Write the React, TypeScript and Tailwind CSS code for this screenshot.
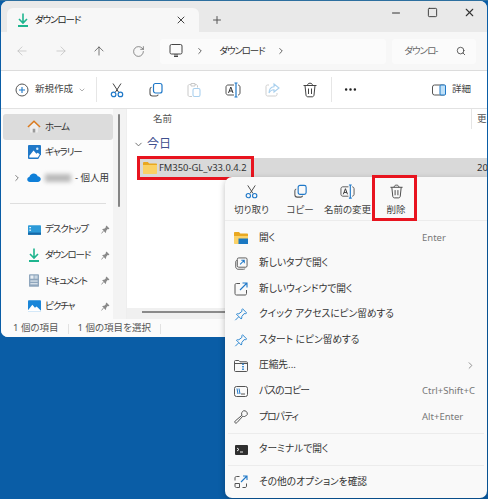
import { ArrowLeft, ArrowRight, ArrowUp, ChevronDown, ChevronRight, Minus, MoreHorizontal, Plus, RotateCw, Search, Square, X } from "lucide-react";

const Cut = ({ s = 16 }: { s?: number }) => (
  <svg width={s} height={s} viewBox="0 0 16 16" fill="none">
    <path d="M4 1.500 9.500 10M12 1.500 6.500 10" stroke="#444" strokeWidth="1" />
    <circle cx="4.600" cy="12.400" r="2.300" stroke="#1f78c8" strokeWidth="1.200" />
    <circle cx="11.400" cy="12.400" r="2.300" stroke="#1f78c8" strokeWidth="1.200" />
  </svg>
);

const Copy = ({ s = 16 }: { s?: number }) => (
  <svg width={s} height={s} viewBox="0 0 16 16" fill="none">
    <path d="M3.500 5.200C2.400 5.600 2 6.300 2 7.300v4.200C2 13 3 14 4.500 14h3.700c1 0 1.700-.4 2.100-1.400" stroke="#555" strokeWidth="1.100" />
    <rect x="5.500" y="1.500" width="8.500" height="9.500" rx="2" stroke="#1f78c8" strokeWidth="1.200" />
  </svg>
);

const Paste = () => (
  <svg width="16" height="16" viewBox="0 0 16 16" fill="none">
    <path d="M5 2.500H3.500C2.700 2.500 2 3.200 2 4v9c0 .8.700 1.500 1.500 1.500H6M9 2.500h1c.8 0 1.500.7 1.500 1.500v1.500M5 1.500h4v2.500H5z" stroke="#c9c9c9" strokeWidth="1" />
    <rect x="7" y="6.500" width="7" height="8" rx="1.500" stroke="#a9d0ee" strokeWidth="1.100" />
  </svg>
);

const Rename = ({ s = 16 }: { s?: number }) => (
  <svg width={s} height={s} viewBox="0 0 16 16" fill="none">
    <path d="M9 3H3C1.900 3 1 3.900 1 5v6c0 1.100.9 2 2 2h6M13 3c1.100 0 2 .9 2 2v6c0 1.100-.9 2-2 2" stroke="#555" strokeWidth="1" />
    <path d="M11 1v14M9.500 1h3M9.500 15h3" stroke="#1f78c8" strokeWidth="1.200" />
    <path d="M3.500 11 5.800 5l2.200 6M4.300 9h3" stroke="#333" strokeWidth="1" />
  </svg>
);

const Share = () => (
  <svg width="16" height="16" viewBox="0 0 16 16" fill="none">
    <path d="M5 3H3.500C2.700 3 2 3.700 2 4.500v8c0 .8.700 1.500 1.500 1.500h8c.8 0 1.500-.7 1.500-1.500V11" stroke="#cfcfcf" strokeWidth="1" />
    <path d="M10 2l5 4-5 4V7.700C7.500 7.700 6 8.800 5 11c0-4 1.800-6 5-6.300z" stroke="#a9d0ee" strokeWidth="1.100" />
  </svg>
);

const Trash = ({ s = 16 }: { s?: number }) => (
  <svg width={s} height={s} viewBox="0 0 16 16" fill="none" stroke="#444" strokeWidth="1">
    <path d="M1.500 3.500h13M5.500 3.500C5.500 2 6.500 1.200 8 1.200s2.500.8 2.500 2.300" />
    <path d="M3 3.500 4 13c.1 1 .8 1.800 1.800 1.800h4.400c1 0 1.700-.8 1.800-1.800l1-9.500" />
    <path d="M6.500 6.500v5.500M9.500 6.500v5.500" />
  </svg>
);

const Pin = () => (
  <svg width="15" height="15" viewBox="0 0 16 16" fill="none" stroke="#2a85d0" strokeWidth="1.100">
    <path d="M9.800 1.500 14.500 6.200 13.500 7 11.500 7 8.800 10.500C9.200 11.500 9 12.500 8.300 13.200L2.800 7.700C3.500 7 4.500 6.800 5.500 7.200L9 4.500V2.500z" />
    <path d="M5.300 10.700 1.500 14.500" />
  </svg>
);

const SmallPin = () => (
  <svg width="9" height="9" viewBox="0 0 16 16" fill="#8a8a8a">
    <path d="M9.800 1 15 6.200 13.500 7.500 11.800 7.300 9 10.700C9.500 11.700 9.300 13 8.300 14L2 7.700C3 6.700 4.300 6.500 5.300 7L8.700 4.200 8.500 2.500z" />
    <path d="M4.500 10.500 1 15" stroke="#8a8a8a" strokeWidth="1.500" />
  </svg>
);

const Download = ({ s = 14 }: { s?: number }) => (
  <svg width={s} height={s} viewBox="0 0 14 14" fill="none" stroke="#1fb58f" strokeWidth="1.600">
    <path d="M7 .5v9M3 6l4 4 4-4" />
    <path d="M2 13h10" strokeWidth="1.800" />
  </svg>
);

const Folder = ({ w = 14 }: { w?: number }) => (
  <svg width={w} height={(w * 12) / 14} viewBox="0 0 14 12">
    <path d="M0 1.200C0 .5.500 0 1.200 0h3.600l1.400 1.600H13c.6 0 1 .4 1 1V4H0z" fill="#e9a820" />
    <path d="M0 3h14v8c0 .6-.4 1-1 1H1c-.6 0-1-.4-1-1z" fill="#fad165" />
  </svg>
);

const Home = () => (
  <svg width="14" height="13" viewBox="0 0 16 15" fill="none">
    <path d="M3.500 7v6.500c0 .6.400 1 1 1h7c.6 0 1-.4 1-1V7L8 3z" fill="#eeeeee" />
    <path d="M6.500 14.500V10h3v4.500" fill="#9a9a9a" />
    <path d="M1 8 8 1.500 15 8" stroke="#dc7a1c" strokeWidth="1.700" />
  </svg>
);

const Gallery = () => (
  <svg width="13" height="14" viewBox="0 0 14 15">
    <path d="M1 0h12c.6 0 1 .4 1 1v9l-3 5H1c-.6 0-1-.4-1-1V1c0-.6.400-1 1-1z" fill="#1f78c8" />
    <path d="M1.500 11.500 6 6l3 3.500 1.500-1.200L12.500 10v.5l-2 3H1.500z" fill="#fff" />
    <circle cx="10" cy="4" r="1.300" fill="#d9ecfa" />
  </svg>
);

const Cloud = () => (
  <svg width="14" height="9" viewBox="0 0 15 10">
    <path d="M3 10C1.300 10 0 8.800 0 7.200 0 5.800 1 4.700 2.300 4.500 3 2 5 .5 7.200.5c2 0 3.700 1.100 4.400 3C13.500 3.600 15 5 15 6.800 15 8.600 13.600 10 11.800 10z" fill="#0f7fd8" />
  </svg>
);

const Desktop = () => (
  <svg width="13" height="10" viewBox="0 0 15 11">
    <rect width="15" height="11" rx="1" fill="#2c9ad8" />
    <rect y="8.500" width="15" height="2.500" fill="#1668a8" />
    <rect x="1.500" y="2" width="2" height="1.500" fill="#dff1fb" />
    <rect x="1.500" y="5" width="2" height="1.500" fill="#dff1fb" />
  </svg>
);

const Documents = () => (
  <svg width="10" height="13" viewBox="0 0 11 14">
    <rect width="11" height="14" rx="1" fill="#8fa6bd" />
    <rect x="1.500" y="1.500" width="3.500" height="3.500" fill="#e8eef4" />
    <rect x="6" y="1.500" width="3.500" height="3.500" fill="#c9d6e2" />
    <rect x="1.500" y="7" width="8" height="1.200" fill="#e8eef4" />
    <rect x="1.500" y="10" width="8" height="1.200" fill="#e8eef4" />
  </svg>
);

const Picture = () => (
  <svg width="13" height="12" viewBox="0 0 15 13">
    <rect width="15" height="13" rx="1" fill="#1a86d8" />
    <path d="M0 11.500 5 5l3 3.500 2-1.500 5 5v.5c0 .3-.3.500-.5.500H.5C.2 13 0 12.800 0 12.500z" fill="#fff" />
  </svg>
);

const OpenFolder = () => (
  <svg width="14" height="12" viewBox="0 0 14 12">
    <path d="M0 1c0-.6.400-1 1-1h4l1.300 1.500H13c.6 0 1 .4 1 1V5H0z" fill="#e9a820" />
    <path d="M0 4h14v7c0 .6-.4 1-1 1H1c-.6 0-1-.4-1-1z" fill="#fbd267" />
    <rect x="4.500" y="6.500" width="9.500" height="5.500" fill="#1a78c2" />
  </svg>
);

const NewTab = () => (
  <svg width="13" height="13" viewBox="0 0 14 14" fill="none">
    <rect x="2.500" y="1" width="10.500" height="10" rx="1.500" stroke="#555" strokeWidth="1" />
    <path d="M2 3.500C1 4 .8 4.500.8 5.500v5.200C.8 12 2 13.200 3.300 13.200H9c1 0 1.500-.3 2-1" stroke="#555" strokeWidth="1" />
    <path d="M5.500 8 10 3.500M6.800 3.500H10v3.200" stroke="#1f78c8" strokeWidth="1.100" />
  </svg>
);

const NewWindow = () => (
  <svg width="14" height="14" viewBox="0 0 14 14" fill="none">
    <path d="M6 1.500H2.500C1.500 1.500 1 2 1 3v8.500c0 1 .5 1.500 1.500 1.500H11c1 0 1.500-.5 1.500-1.500V8" stroke="#555" strokeWidth="1" />
    <path d="M6 8 13 1M8.500 1H13v4.500" stroke="#1f78c8" strokeWidth="1.100" />
  </svg>
);

const Zip = () => (
  <svg width="14" height="12" viewBox="0 0 14 12" fill="none">
    <path d="M1.500.5h3.300L6 1.800h6.500c.6 0 1 .4 1 1v7.700c0 .6-.4 1-1 1h-11c-.6 0-1-.4-1-1v-9c0-.6.400-1 1-1zM.5 3.500h13" stroke="#555" strokeWidth="1" />
    <path d="M9 3.500v7" stroke="#1f78c8" strokeWidth="1.600" strokeDasharray="1.500 1" />
  </svg>
);

const PathCopy = () => (
  <svg width="14" height="11" viewBox="0 0 14 11" fill="none">
    <rect x=".5" y=".5" width="13" height="10" rx="2" stroke="#555" strokeWidth="1" />
    <path d="M3 2.500 4 8M5 2.500 6 8" stroke="#1f78c8" strokeWidth="1" />
    <path d="M7 8h4" stroke="#555" strokeWidth="1" />
  </svg>
);

const Wrench = () => (
  <svg width="14" height="14" viewBox="0 0 14 14" fill="none" stroke="#555" strokeWidth="1">
    <path d="M9.500 .8 7.700 2.600c-.3.700-.2 1.800.3 2.600L1.200 11c-.6.600-.6 1.300-.1 1.800.5.500 1.200.5 1.800-.1L8.800 6.200c.9.500 2.100.5 2.900-.2l1.600-1.600C13.600 2 11.800.4 9.500.8z" />
  </svg>
);

const Terminal = () => (
  <svg width="13" height="10" viewBox="0 0 13 10">
    <rect width="13" height="10" rx="1" fill="#2f2f2f" />
    <path d="M2 3l2 1.500L2 6" stroke="#fff" strokeWidth=".9" fill="none" />
    <path d="M5 7h3" stroke="#fff" strokeWidth=".9" />
  </svg>
);

const MoreOptions = () => (
  <svg width="14" height="14" viewBox="0 0 14 14" fill="none">
    <path d="M5.500 1.500H2.500C1.500 1.500 1 2 1 3v2.500M1 8.500V11c0 1 .5 1.500 1.500 1.500H5.500v-4H1M8.500 12.500H11c1 0 1.500-.5 1.500-1.500V8.500" stroke="#555" strokeWidth="1" />
    <path d="M7 7 13 1M9 1h4v4" stroke="#1f78c8" strokeWidth="1.100" />
  </svg>
);

const Tool = ({ children, w = "w-[38.600px]" }: { children: React.ReactNode; w?: string }) => (
  <div className={`${w} flex justify-center`}>{children}</div>
);

const Side = ({ icon, label, pin, sel, caret }: { icon: React.ReactNode; label: React.ReactNode; pin?: boolean; sel?: boolean; caret?: boolean }) => (
  <div className={`h-[25.600px] flex items-center relative rounded-[3px] ${sel ? "bg-[#dcdcdc]" : ""}`}>
    {caret && <ChevronRight className="absolute left-[9px] text-[#666]" size={10} />}
    <div className="w-[40px] flex justify-end pr-[1px] shrink-0">
      <div className="w-[16px] flex justify-center">{icon}</div>
    </div>
    <span className="ml-[2px] flex-1 whitespace-nowrap tracking-[-1.100px]">{label}</span>
    {pin && <div className="mr-[3px]"><SmallPin /></div>}
  </div>
);

const MenuTool = ({ icon, label, w }: { icon: React.ReactNode; label: string; w: string }) => (
  <div className={`${w} flex flex-col items-center`}>
    <div className="h-[18px] flex items-center">{icon}</div>
    <span className="mt-[3px] text-[9.500px] text-[#444] whitespace-nowrap">{label}</span>
  </div>
);

const MenuRow = ({ icon, label, hint, arrow, tight }: { icon: React.ReactNode; label: string; hint?: string; arrow?: boolean; tight?: boolean }) => (
  <div className="h-[25.600px] flex items-center pl-[9px] pr-[11px]">
    <div className="w-[14px] flex justify-center shrink-0">{icon}</div>
    <span className={`ml-[11px] flex-1 whitespace-nowrap text-[#333] text-[9.700px] ${tight ? "tracking-[-0.800px]" : ""}`}>{label}</span>
    {hint && <span className="text-[9.500px] text-[#777] w-[54px] whitespace-nowrap">{hint}</span>}
    {arrow && <ChevronRight className="text-[#888]" size={11} />}
  </div>
);

export default function App() {
  return (
    <div className="w-[488px] h-[499px] relative overflow-hidden bg-[#0a5da6] text-[9.500px] text-[#333] [font-family:'Noto_Sans','Noto_Sans_CJK_JP',sans-serif] [font-feature-settings:'palt']">
      <div className="bg-[#2d6f9f] h-[1px]" />
      <div className="ml-[1px] w-[486px] h-[336px] rounded-t-[7px] rounded-bl-[7px] overflow-hidden bg-white flex flex-col">
        {/* tabs */}
        <div className="h-[31px] bg-[#e9e9e9] flex items-end pl-[6px] shrink-0 relative">
          <div className="w-[192px] h-[24px] bg-[#f7f7f7] rounded-t-[6px] flex items-center pl-[9px] pr-[12px]">
            <Download />
            <span className="ml-[5px] flex-1 text-[#222] tracking-[-1.100px]">ダウンロード</span>
            <X size={12} className="text-[#444]" />
          </div>
          <Plus size={12} className="ml-[12px] mb-[6px] text-[#555]" />
          <div className="flex-1" />
          <div className="flex items-center mb-[13px] mr-[11px] gap-[25px] text-[#333]">
            <Minus size={12} />
            <Square size={11} />
            <X size={13} />
          </div>
        </div>
        {/* address */}
        <div className="h-[39px] bg-[#f7f7f7] border-b border-[#dcdcdc] flex items-center pl-[2px] shrink-0">
          <Tool><ArrowLeft size={14} className="text-[#bbb]" strokeWidth={1.200} /></Tool>
          <Tool><ArrowRight size={14} className="text-[#bbb]" strokeWidth={1.200} /></Tool>
          <Tool><ArrowUp size={14} className="text-[#444]" strokeWidth={1.200} /></Tool>
          <Tool><RotateCw size={13} className="text-[#555]" strokeWidth={1.200} /></Tool>
          <div className="ml-[3px] w-[226px] h-[25px] bg-[#fbfbfb] rounded-[3px] flex items-center pl-[9px]">
            <svg width="15" height="14" viewBox="0 0 15 14" fill="none" stroke="#444" strokeWidth="1">
              <rect x="1" y=".5" width="12" height="9.500" rx="1.500" />
              <path d="M5 12.500h4M6 10v2.500M8 10v2.500" />
            </svg>
            <ChevronRight size={10} className="ml-[11px] text-[#444]" />
            <span className="ml-[14px] tracking-[-1.100px]">ダウンロード</span>
            <ChevronRight size={10} className="ml-[11px] text-[#444]" />
          </div>
          <div className="ml-[6px] w-[84px] h-[25px] bg-[#fbfbfb] rounded-[3px] flex items-center pl-[12px] text-[#666]">
            <span className="flex-1 tracking-[-1px]">ダウンロ-</span>
            <Search size={10} className="mr-[10px] text-[#444]" />
          </div>
        </div>
        {/* command bar */}
        <div className="h-[38px] bg-white border-b border-[#e2e2e2] flex items-center shrink-0">
          <div className="w-[95px] pl-[14px] flex items-center">
            <svg width="14" height="14" viewBox="0 0 14 14" fill="none">
              <circle cx="7" cy="7" r="6" stroke="#555" strokeWidth="1" />
              <path d="M7 4v6M4 7h6" stroke="#1f78c8" strokeWidth="1.100" />
            </svg>
            <span className="ml-[6px] text-[#444]">新規作成</span>
            <ChevronDown size={8} className="ml-[5px] text-[#888]" />
          </div>
          <div className="w-[1px] h-[25px] bg-[#e6e6e6]" />
          <div className="flex ml-[1px]">
            <Tool><Cut /></Tool>
            <Tool><Copy /></Tool>
            <Tool><Paste /></Tool>
            <Tool><Rename /></Tool>
            <Tool><Share /></Tool>
            <Tool><Trash /></Tool>
          </div>
          <div className="w-[1px] h-[25px] bg-[#e6e6e6] ml-[1px]" />
          <div className="w-[38px] flex justify-center"><MoreHorizontal size={15} className="text-[#222]" /></div>
          <div className="flex-1" />
          <svg width="14" height="12" viewBox="0 0 14 12" fill="none">
            <rect x=".5" y="1" width="13" height="10" rx="2" stroke="#555" strokeWidth="1" />
            <rect x="8" y="1" width="5.500" height="10" rx="1" fill="#bfe0f7" stroke="#1f78c8" strokeWidth="1" />
          </svg>
          <span className="ml-[6px] mr-[16px] text-[#444]">詳細</span>
        </div>
        {/* body */}
        <div className="flex-1 flex min-h-0">
          <div className="w-[112px] bg-[#fbfbfb] pl-[2px] pt-[5px] shrink-0">
            <Side sel icon={<Home />} label="ホーム" />
            <Side icon={<Gallery />} label="ギャラリー" />
            <Side caret icon={<Cloud />} label={<span className="flex items-center tracking-normal"><span className="w-[26px] h-[8px] bg-[#b9b9b9] blur-[2px] mr-[4px]" />- 個人用</span>} />
            <div className="h-[26px] flex items-center px-[7px]"><div className="h-[1px] w-full bg-[#dedede]" /></div>
            <Side pin icon={<Desktop />} label="デスクトップ" />
            <Side pin icon={<Download />} label="ダウンロード" />
            <Side pin icon={<Documents />} label="ドキュメント" />
            <Side pin icon={<Picture />} label="ピクチャ" />
          </div>
          <div className="w-[14px] bg-[#f3f3f3] border-r border-[#eee] shrink-0 pt-[5px] pl-[5px]">
            <div className="w-[2px] h-[93px] bg-[#858585] rounded-full" />
          </div>
          <div className="flex-1 bg-white flex flex-col min-w-0">
            <div className="h-[20px] pl-[26px] flex items-center text-[#555] relative">
              名前
              <div className="absolute left-[344px] top-0 h-full w-[1px] bg-[#e5e5e5]" />
              <span className="absolute left-[350px]">更</span>
            </div>
            <div className="h-[29px] flex items-center pl-[6px] pt-[1px] text-[#3f4f8f]">
              <ChevronDown size={11} className="text-[#666]" />
              <span className="ml-[3px] text-[12px]">今日</span>
            </div>
            <div className="h-[20px] ml-[12px] bg-[#d9d9d9] flex items-center pl-[4px] relative whitespace-nowrap">
              <Folder />
              <span className="ml-[2px] text-[9.400px]">FM350-GL_v33.0.4.2</span>
              <span className="absolute left-[338px] text-[9.500px]">20</span>
              <div className="absolute -left-[2px] -top-[2px] w-[117px] h-[24px] border-[3px] border-[#e8141f]" />
            </div>
            <div className="flex-1" />
            <div className="h-[11px] bg-[#f0f0f0] pl-[15px] pt-[3px]">
              <div className="h-[1.500px] w-[90px] bg-[#8a8a8a]" />
            </div>
          </div>
        </div>
        {/* status */}
        <div className="h-[18px] bg-[#fbfbfb] flex items-center pl-[12px] pt-[1px] text-[#555] shrink-0">
          <span>1 個の項目</span>
          <div className="w-[1px] h-[10px] bg-[#e2e2e2] mx-[9px]" />
          <span>1 個の項目を選択</span>
          <div className="w-[1px] h-[10px] bg-[#e2e2e2] ml-[9px]" />
        </div>
      </div>
      {/* context menu */}
      <div className="absolute left-[225px] top-[177px] w-[262px] h-[321px] bg-[#f9f9f9] rounded-l-[7px] rounded-br-[7px] shadow-[0_2px_6px_rgba(0,0,0,0.25)]">
        <div className="h-[44px] flex pt-[5px] pl-[1px] border-b border-[#ececec]">
          <MenuTool w="w-[51px]" icon={<Cut s={15} />} label="切り取り" />
          <MenuTool w="w-[46px]" icon={<Copy s={15} />} label="コピー" />
          <MenuTool w="w-[49px]" icon={<Rename s={15} />} label="名前の変更" />
          <MenuTool w="w-[48px]" icon={<Trash s={15} />} label="削除" />
        </div>
        <div className="pt-[4px]">
          <MenuRow icon={<OpenFolder />} label="開く" hint="Enter" />
          <MenuRow icon={<NewTab />} label="新しいタブで開く" />
          <MenuRow icon={<NewWindow />} label="新しいウィンドウで開く" />
          <MenuRow icon={<Pin />} label="クイック アクセスにピン留めする" />
          <MenuRow icon={<Pin />} label="スタート にピン留めする" />
          <MenuRow icon={<Zip />} label="圧縮先..." arrow />
          <MenuRow tight icon={<PathCopy />} label="パスのコピー" hint="Ctrl+Shift+C" />
          <MenuRow tight icon={<Wrench />} label="プロパティ" hint="Alt+Enter" />
          <div className="h-[7px] flex items-center px-[3px]"><div className="h-[1px] w-full bg-[#ececec]" /></div>
          <MenuRow icon={<Terminal />} label="ターミナルで開く" />
          <div className="h-[7px] flex items-center px-[3px]"><div className="h-[1px] w-full bg-[#ececec]" /></div>
          <MenuRow icon={<MoreOptions />} label="その他のオプションを確認" />
        </div>
        <div className="absolute left-[147px] -top-[2px] w-[45px] h-[46px] border-[3px] border-[#e8141f]" />
      </div>
    </div>
  );
}
